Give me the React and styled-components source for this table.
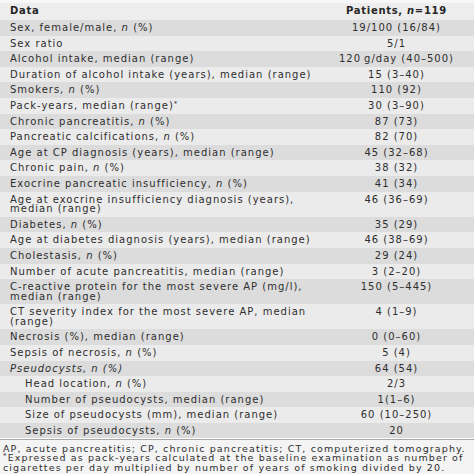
import React from 'react'
import styled, { createGlobalStyle } from 'styled-components'

const GlobalStyle = createGlobalStyle`
    html, body {
        margin: 0;
        padding: 0;
        background: #ffffff;
    }
    body {
        font-family: "DejaVu Sans", Verdana, sans-serif;
        color: #2e2e2e;
    }
`;

const Table = styled.div`
    width: 474px;
    height: 474px;
    display: flex;
    flex-direction: column;
    background-color: #f4f4f4;
    overflow: hidden;
    font-size: 10px;
    letter-spacing: 1px;
`;

const HeaderRow = styled.div`
    display: grid;
    grid-template-columns: 1fr 155px;
    align-items: center;
    height: 20px;
    background: linear-gradient(#f7f7f7 0, #f7f7f7 3px, #ededed 3px);
    font-weight: bold;
    letter-spacing: 0.7px;
    color: #262626;
`;

const Row = styled.div`
    display: grid;
    grid-template-columns: 1fr 155px;
    padding: 3px 0;
    line-height: 9.6px;
    background-color: ${props => props.$dark ? '#dcdcdc' : '#ebebeb'};
`;

const Label = styled.div`
    padding-left: ${props => props.$indent ? 25 : 10}px;
    white-space: pre;
    font-style: ${props => props.$italic ? 'italic' : 'normal'};
`;

const Value = styled.div`
    text-align: center;
    white-space: nowrap;
`;

const Star = styled.span`
    font-size: 7px;
    vertical-align: top;
    line-height: 7px;
`;

const Footer = styled.div`
    border-top: 1px solid #a8a8a8;
    box-shadow: 0 -1px 0 #ffffff;
    padding: 4px 3px 0;
    font-size: 9.5px;
    line-height: 9.5px;
    letter-spacing: 1.12px;
    white-space: nowrap;
    background-color: #f4f4f4;
`;

const n = <i>n</i>;

const rows = [
    { label: <>Sex, female/male, {n} (%)</>, value: '19/100 (16/84)' },
    { label: 'Sex ratio', value: '5/1' },
    { label: 'Alcohol intake, median (range)', value: '120\u2009g/day (40\u2013500)' },
    { label: 'Duration of alcohol intake (years), median (range)', value: '15 (3\u201340)' },
    { label: <>Smokers, {n} (%)</>, value: '110 (92)' },
    { label: <>Pack-years, median (range)<Star>*</Star></>, value: '30 (3\u201390)' },
    { label: <>Chronic pancreatitis, {n} (%)</>, value: '87 (73)' },
    { label: <>Pancreatic calcifications, {n} (%)</>, value: '82 (70)' },
    { label: 'Age at CP diagnosis (years), median (range)', value: '45 (32\u201368)' },
    { label: <>Chronic pain, {n} (%)</>, value: '38 (32)' },
    { label: <>Exocrine pancreatic insufficiency, {n} (%)</>, value: '41 (34)' },
    { label: 'Age at exocrine insufficiency diagnosis (years),\nmedian (range)', value: '46 (36\u201369)' },
    { label: <>Diabetes, {n} (%)</>, value: '35 (29)' },
    { label: 'Age at diabetes diagnosis (years), median (range)', value: '46 (38\u201369)' },
    { label: <>Cholestasis, {n} (%)</>, value: '29 (24)' },
    { label: 'Number of acute pancreatitis, median (range)', value: '3 (2\u201320)' },
    { label: 'C-reactive protein for the most severe AP (mg/l),\nmedian (range)', value: '150 (5\u2013445)' },
    { label: 'CT severity index for the most severe AP, median\n(range)', value: '4 (1\u20139)' },
    { label: 'Necrosis (%), median (range)', value: '0 (0\u201360)' },
    { label: <>Sepsis of necrosis, {n} (%)</>, value: '5 (4)' },
    { label: 'Pseudocysts, n (%)', value: '64 (54)', italic: true },
    { label: <>Head location, {n} (%)</>, value: '2/3', indent: true },
    { label: 'Number of pseudocysts, median (range)', value: '1(1\u20136)', indent: true },
    { label: 'Size of pseudocysts (mm), median (range)', value: '60 (10\u2013250)', indent: true },
    { label: <>Sepsis of pseudocysts, {n} (%)</>, value: '20', indent: true },
];

const App = () => {
    return (
        <>
            <GlobalStyle />
            <Table>
                <HeaderRow>
                    <Label>Data</Label>
                    <Value>Patients, {n}=119</Value>
                </HeaderRow>
                {rows.map((row, i) => (
                    <Row key={i} $dark={i % 2 === 0}>
                        <Label $indent={row.indent} $italic={row.italic}>{row.label}</Label>
                        <Value>{row.value}</Value>
                    </Row>
                ))}
                <Footer>
                    AP, acute pancreatitis; CP, chronic pancreatitis; CT, computerized tomography.<br />
                    <Star>*</Star>Expressed as pack-years calculated at the baseline examination as number of<br />
                    cigarettes per day multiplied by number of years of smoking divided by 20.
                </Footer>
            </Table>
        </>
    )
}

export default App;
